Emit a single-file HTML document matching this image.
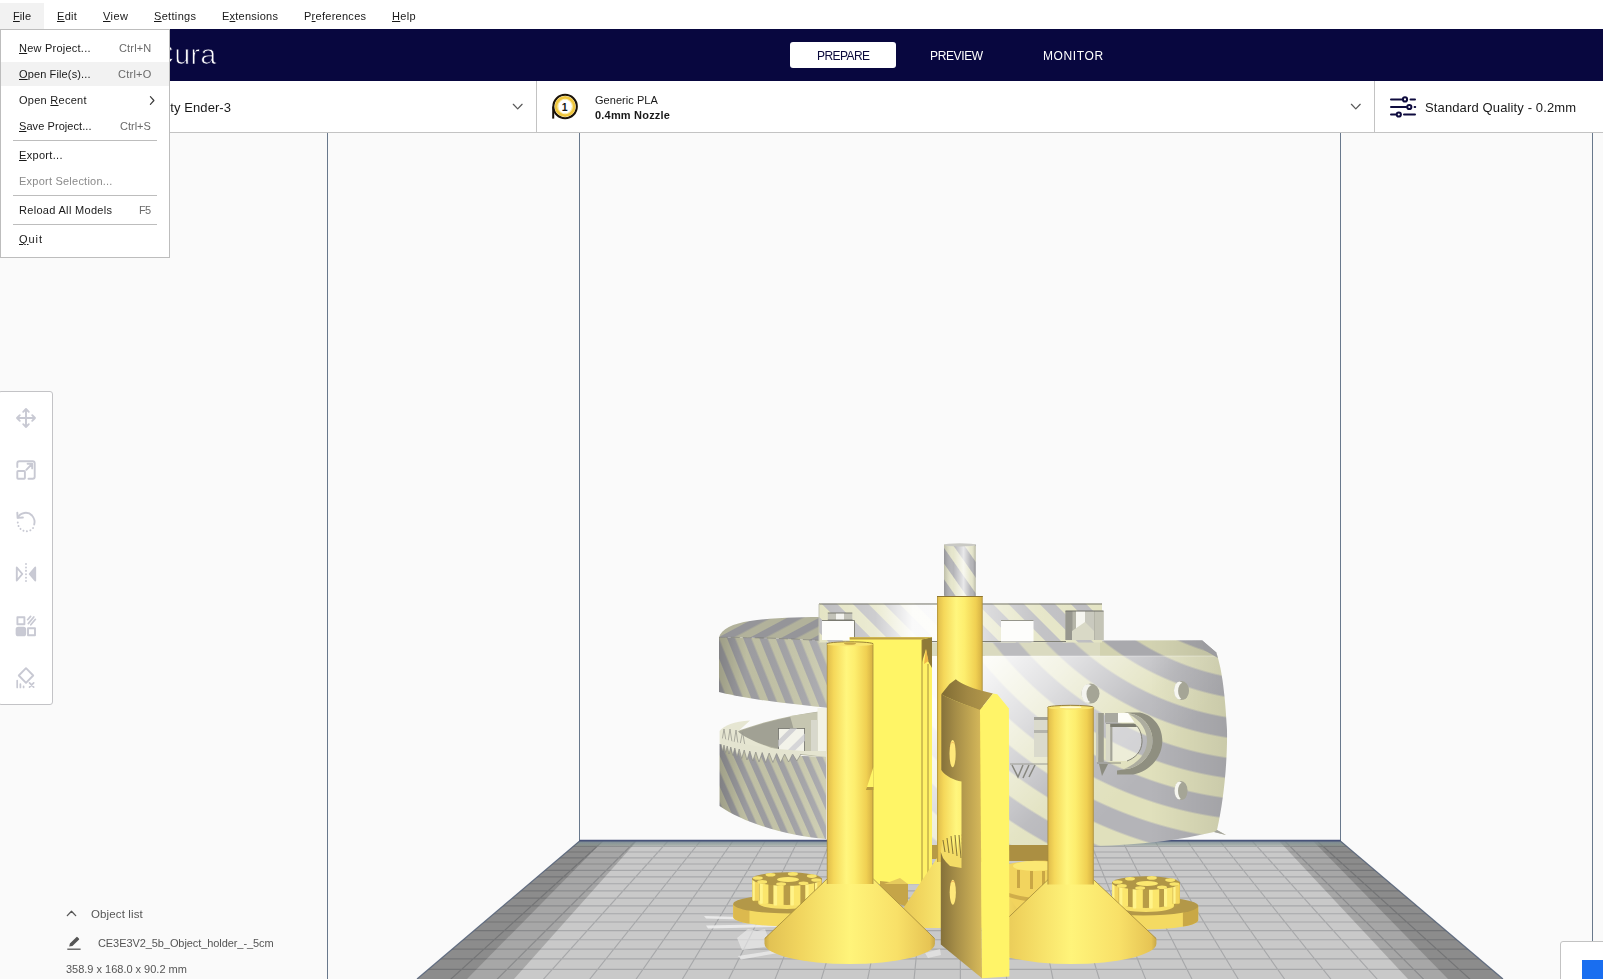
<!DOCTYPE html>
<html lang="en">
<head>
<meta charset="utf-8">
<title>Ultimaker Cura</title>
<style>
html,body{margin:0;padding:0;}
body{width:1603px;height:979px;overflow:hidden;position:relative;background:#fafafa;font-family:"Liberation Sans", Arial, sans-serif;}
.t{position:absolute;white-space:pre;line-height:20px;height:20px;font-size:11px;will-change:transform;}
.t u{text-decoration:underline;text-underline-offset:1px;text-decoration-thickness:1px;}
#scene{position:absolute;left:0;top:0;width:1603px;height:979px;}
#menubar{position:absolute;left:0;top:0;width:1603px;height:29px;background:#ffffff;}
#filebtn{position:absolute;left:0;top:3px;width:44px;height:26px;background:#f2f2f2;}
#header{position:absolute;left:0;top:29px;width:1603px;height:52px;background:#08073f;}
#prepare{position:absolute;left:790px;top:42px;width:106px;height:26px;background:#ffffff;border-radius:3px;}
#toolbar{position:absolute;left:0;top:81px;width:1603px;height:51px;background:#ffffff;border-bottom:1px solid #c3c3c3;}
.vsep{position:absolute;top:81px;width:1px;height:51px;background:#c3c3c3;}
#tools{position:absolute;left:-2px;top:391px;width:53px;height:312px;background:#ffffff;border:1px solid #c3c3c6;border-radius:3px;}
#actionpanel{position:absolute;left:1560px;top:941px;width:60px;height:60px;background:#ffffff;border:1px solid #c3c3c3;border-radius:3px;}
#slicebtn{position:absolute;left:1582px;top:960px;width:40px;height:30px;background:#196ef0;}
#filemenu{position:absolute;left:0;top:29px;width:168px;height:227px;background:#ffffff;border:1px solid #bdbdbd;}
#hl{position:absolute;left:1px;top:62px;width:168px;height:24px;background:#f2f2f2;}
.msep{position:absolute;left:13px;width:144px;height:1px;background:#bdbdbd;}
svg.ic{position:absolute;overflow:visible;}
</style>
</head>
<body>
<div id="scene">
<svg width="1603" height="979" viewBox="0 0 1603 979">
<defs>
<pattern id="st45" width="22" height="22" patternUnits="userSpaceOnUse" patternTransform="rotate(-45)">
 <rect width="22" height="22" fill="#e4e4c4"/><rect width="11" height="22" fill="#bdbdc0"/>
</pattern>
<pattern id="stUL" width="15" height="15" patternUnits="userSpaceOnUse" patternTransform="rotate(-22)">
 <rect width="15" height="15" fill="#c9c9ac"/><rect width="7.5" height="15" fill="#a6a6aa"/>
</pattern>
<pattern id="stULtop" width="15" height="15" patternUnits="userSpaceOnUse" patternTransform="rotate(62)">
 <rect width="15" height="15" fill="#bcbca4"/><rect width="7.5" height="15" fill="#9e9ea2"/>
</pattern>
<pattern id="stLL" width="12.5" height="12.5" patternUnits="userSpaceOnUse" patternTransform="rotate(-24)">
 <rect width="12.5" height="12.5" fill="#cbcbae"/><rect width="6.2" height="12.5" fill="#a4a4a8"/>
</pattern>
<pattern id="stThin" width="18" height="18" patternUnits="userSpaceOnUse" patternTransform="rotate(-35)">
 <rect width="18" height="18" fill="#e6e6cc"/><rect width="9" height="18" fill="#b4b4b8"/>
</pattern>
<radialGradient id="stWall" cx="1275" cy="425" r="40" gradientUnits="userSpaceOnUse" spreadMethod="repeat">
 <stop offset="0" stop-color="#e0e0bc"/><stop offset="0.38" stop-color="#e0e0bc"/><stop offset="0.43" stop-color="#b4b4b8"/><stop offset="0.88" stop-color="#b4b4b8"/><stop offset="0.93" stop-color="#e0e0bc"/><stop offset="1" stop-color="#e0e0bc"/>
</radialGradient>
<linearGradient id="wallHi" x1="985" y1="650" x2="1130" y2="790" gradientUnits="userSpaceOnUse">
 <stop offset="0" stop-color="#ffffff" stop-opacity="0.95"/><stop offset="0.35" stop-color="#ffffff" stop-opacity="0.6"/><stop offset="0.75" stop-color="#ffffff" stop-opacity="0.12"/><stop offset="1" stop-color="#ffffff" stop-opacity="0"/>
</linearGradient>
<linearGradient id="wallEdge" x1="1150" y1="0" x2="1228" y2="0" gradientUnits="userSpaceOnUse">
 <stop offset="0" stop-color="#000" stop-opacity="0"/><stop offset="1" stop-color="#000" stop-opacity="0.10"/>
</linearGradient>
<linearGradient id="ulShade" x1="719" y1="0" x2="830" y2="0" gradientUnits="userSpaceOnUse">
 <stop offset="0" stop-color="#000" stop-opacity="0.22"/><stop offset="0.25" stop-color="#000" stop-opacity="0.06"/><stop offset="1" stop-color="#fff" stop-opacity="0.12"/>
</linearGradient>
<linearGradient id="blockHi" x1="819" y1="0" x2="1102" y2="0" gradientUnits="userSpaceOnUse">
 <stop offset="0" stop-color="#fff" stop-opacity="0"/><stop offset="0.2" stop-color="#fff" stop-opacity="0.25"/><stop offset="0.33" stop-color="#fff" stop-opacity="0.92"/><stop offset="0.44" stop-color="#fff" stop-opacity="0.92"/><stop offset="0.6" stop-color="#fff" stop-opacity="0.45"/><stop offset="0.78" stop-color="#fff" stop-opacity="0.1"/><stop offset="1" stop-color="#fff" stop-opacity="0"/>
</linearGradient>
<linearGradient id="cyl" x1="0" y1="0" x2="1" y2="0">
 <stop offset="0" stop-color="#a88c3a"/><stop offset="0.035" stop-color="#e4c24e"/><stop offset="0.15" stop-color="#f5d85a"/><stop offset="0.42" stop-color="#fff67e"/><stop offset="0.6" stop-color="#fdee6e"/><stop offset="0.85" stop-color="#f0d052"/><stop offset="0.965" stop-color="#dab646"/><stop offset="1" stop-color="#a88c3a"/>
</linearGradient>
<linearGradient id="cone" x1="0" y1="0" x2="1" y2="0">
 <stop offset="0" stop-color="#c8a848"/><stop offset="0.03" stop-color="#e2c254"/><stop offset="0.2" stop-color="#f0d45e"/><stop offset="0.5" stop-color="#fff47a"/><stop offset="0.78" stop-color="#f8e068"/><stop offset="0.97" stop-color="#e6c454"/><stop offset="1" stop-color="#c8a848"/>
</linearGradient>
<linearGradient id="thinHi" x1="0" y1="0" x2="1" y2="0">
 <stop offset="0" stop-color="#000" stop-opacity="0.18"/><stop offset="0.3" stop-color="#fff" stop-opacity="0"/><stop offset="0.62" stop-color="#fff" stop-opacity="0.7"/><stop offset="0.85" stop-color="#fff" stop-opacity="0"/><stop offset="1" stop-color="#000" stop-opacity="0.22"/>
</linearGradient>
<linearGradient id="pieceL" x1="941" y1="0" x2="981" y2="0" gradientUnits="userSpaceOnUse">
 <stop offset="0" stop-color="#85713a"/><stop offset="0.35" stop-color="#a48c47"/><stop offset="1" stop-color="#d5b85a"/>
</linearGradient>
<linearGradient id="pieceTop" x1="941" y1="0" x2="995" y2="0" gradientUnits="userSpaceOnUse">
 <stop offset="0" stop-color="#7f6b33"/><stop offset="0.5" stop-color="#a18844"/><stop offset="1" stop-color="#b79c4c"/>
</linearGradient>
<linearGradient id="floorBack" x1="0" y1="841" x2="0" y2="847" gradientUnits="userSpaceOnUse">
 <stop offset="0" stop-color="#74869c" stop-opacity="0.85"/><stop offset="0.6" stop-color="#84968e" stop-opacity="0.55"/><stop offset="1" stop-color="#9aa89e" stop-opacity="0"/>
</linearGradient>
<clipPath id="floorClip"><polygon points="579.5,841 1340.5,841 1503,979 417,979"/></clipPath>
</defs>
<g fill="none" stroke="#68788c" stroke-width="1">
<line x1="327.5" y1="132" x2="327.5" y2="990"/>
<line x1="579.5" y1="132" x2="579.5" y2="841"/>
<line x1="1340.5" y1="132" x2="1340.5" y2="841"/>
<line x1="1592.5" y1="132" x2="1592.5" y2="990"/>
</g>
<g clip-path="url(#floorClip)">
<rect x="400" y="841" width="1120" height="140" fill="#c9c9c9"/>
<path d="M570.6,841L397.5,985M603.0,841L444.4,985M635.5,841L491.3,985M668.0,841L538.2,985M700.4,841L585.1,985M732.9,841L632.0,985M765.3,841L678.9,985M797.8,841L725.8,985M830.3,841L772.7,985M862.7,841L819.6,985M895.2,841L866.5,985M927.6,841L913.5,985M960.1,841L960.4,985M992.6,841L1007.3,985M1025.0,841L1054.2,985M1057.5,841L1101.1,985M1089.9,841L1148.0,985M1122.4,841L1194.9,985M1154.9,841L1241.8,985M1187.3,841L1288.7,985M1219.8,841L1335.6,985M1252.2,841L1382.5,985M1284.7,841L1429.5,985M1317.2,841L1476.4,985M1349.6,841L1523.3,985M400,846.3H1520M400,852.0H1520M400,857.9H1520M400,864.0H1520M400,870.3H1520M400,876.9H1520M400,883.7H1520M400,890.8H1520M400,898.1H1520M400,905.8H1520M400,913.7H1520M400,922.0H1520M400,930.6H1520M400,939.7H1520M400,949.1H1520M400,958.9H1520M400,969.3H1520M400,980.1H1520" stroke="#a7a8aa" stroke-width="1.15" fill="none"/>
<polygon points="579.5,841 637,841 514,979 417,979" fill="#000" fill-opacity="0.17"/>
<polygon points="579.5,841 603,841 467,979 417,979" fill="#000" fill-opacity="0.16"/>
<polygon points="1340.5,841 1279,841 1408,979 1503,979" fill="#000" fill-opacity="0.17"/>
<polygon points="1340.5,841 1313,841 1448,979 1503,979" fill="#000" fill-opacity="0.16"/>
<rect x="560" y="841" width="800" height="6" fill="url(#floorBack)"/>
</g>
<path d="M417,979L579.5,841H1340.5L1503,979" fill="none" stroke="#4f5d74" stroke-width="1.2" stroke-opacity="0.85"/>
<line x1="579.5" y1="840.5" x2="1340.5" y2="840.5" stroke="#47527a" stroke-width="1.3"/>
<!-- ===== thin striped rod on top ===== -->
<g>
<rect x="944" y="544.5" width="31.7" height="53" fill="url(#stThin)"/>
<rect x="944" y="544.5" width="31.7" height="53" fill="url(#thinHi)"/>
<ellipse cx="959.8" cy="544.8" rx="15.8" ry="1.6" fill="#c9c9c4"/>
</g>

<!-- ===== upper-left striped ring ===== -->
<g>
<path id="ulSide" d="M719,637.5 C735,637 780,638 830,641 L830,708 C800,705 750,700 719,692 Z" fill="url(#stUL)"/>
<path d="M719,637.5 C735,637 780,638 830,641 L830,708 C800,705 750,700 719,692 Z" fill="url(#ulShade)"/>
<path d="M719,637.5 C721,629 733,623.5 750,621 C775,617.5 800,617 830,617 L830,641 C780,638 735,637 719,637.5 Z" fill="url(#stULtop)"/>
<path d="M719,637.5 C721,629 733,623.5 750,621 C775,617.5 800,617 830,617 L830,641 C780,638 735,637 719,637.5 Z" fill="#000" fill-opacity="0.05"/>
<path d="M719,637.5 C735,637 780,638 830,641" fill="none" stroke="#77776c" stroke-width="0.9" stroke-dasharray="9 3" stroke-opacity="0.7"/>
</g>

<!-- ===== lower-left gear ring ===== -->
<g>
<!-- inner back surface (lens) -->
<path d="M733,733 C760,722 795,714 826,710.5 L826,757 C800,756 765,752 733,733 Z" fill="#b9b9a4"/>
<path d="M736,732.5 C760,723 790,716 818,712 L818,753 C790,752 760,747 736,732.5 Z" fill="#8e8e86" fill-opacity="0.55"/>
<path d="M790,716 L818,712 L818,753 L800,752 Z" fill="#cfcfb8" fill-opacity="0.8"/>
<!-- light vertical post -->
<rect x="817.5" y="708" width="9" height="46" fill="#f2f2e6"/>
<rect x="811" y="720" width="6.5" height="34" fill="#d8d8cc"/>
<!-- light square hole -->
<rect x="778.4" y="728.4" width="26.2" height="23.6" fill="#f3f3ea" stroke="#6f6f68" stroke-width="0.8"/>
<path d="M778.4,740 L790,728.4 L797,728.4 L778.4,747 Z" fill="#d2d2d4"/>
<path d="M786,752 L804.6,733.5 L804.6,741 L793.5,752 Z" fill="#d6d6d8"/>
<!-- teeth tops (cream) -->
<path d="M719.6,744 L719.6,731 C724,725.5 734,721.5 750,720.5 L738,731.5 C742,736 760,745 780,750.5 L780,754 Z" fill="#e6e6d2"/>
<path d="M722,741 l2,-12 l2,12 m2,1 l2,-13 l2,13 m2,1 l2,-13 l2,14 m2,1 l2.5,-13 l2.5,14" fill="none" stroke="#9a9a90" stroke-width="0.8"/>
<!-- side face -->
<path d="M719.6,744 C745,752 790,756 826,757 L826,839 C790,836 745,824 719.6,806 Z" fill="url(#stLL)"/>
<path d="M719.6,744 C745,752 790,756 826,757 L826,839 C790,836 745,824 719.6,806 Z" fill="url(#ulShade)"/>
<!-- teeth notches along top of side -->
<path d="M721,744 l1.5,7 l1.5,-6 l1.6,7.5 l1.6,-6.5 l1.8,8 l1.8,-7 l2,8.5 l2,-7.5 l2.2,9 l2.2,-8 l2.5,9.5 l2.5,-8.5 l2.8,10 l2.8,-9 l3,10 l3,-9 l3.2,10 l3.2,-9.5 l3.5,10 l3.5,-9.5 l3.7,9.5 l3.7,-9 l4,9 l4,-8.5 l4,8 l4,-8 l4.2,7 l4.2,-7 L826,757 L826,751 C790,752 745,746 721,738 Z" fill="#e4e4d0"/>
<path d="M721,744 l1.5,7 l1.5,-6 l1.6,7.5 l1.6,-6.5 l1.8,8 l1.8,-7 l2,8.5 l2,-7.5 l2.2,9 l2.2,-8 l2.5,9.5 l2.5,-8.5 l2.8,10 l2.8,-9 l3,10 l3,-9 l3.2,10 l3.2,-9.5 l3.5,10 l3.5,-9.5 l3.7,9.5 l3.7,-9 l4,9 l4,-8.5 l4,8 l4,-8 l4.2,7 l4.2,-7" fill="none" stroke="#8d8d86" stroke-width="0.7"/>
</g>

<!-- ===== right big wall ===== -->
<g>
<path id="wall" d="M930,641 L1202,640.3 L1216,652.3 C1221,665 1225,690 1227,730 C1227.5,760 1224,800 1217,830 L1226,835 L1214,832 C1180,840 1140,845 1094,846 L930,846 Z" fill="url(#stWall)"/>
<path d="M930,656 L1218,656 C1221,665 1225,690 1227,730 C1227.5,760 1224,800 1217,830 L1226,835 L1214,832 C1180,840 1140,845 1094,846 L930,846 Z" fill="url(#wallHi)"/>
<path d="M930,641 L1100,641 L1100,656 L930,656 Z" fill="#ffffff" fill-opacity="0.25"/>
<path d="M930,641 L1202,640.3 L1216,652.3 C1221,665 1225,690 1227,730 C1227.5,760 1224,800 1217,830 L1226,835 L1214,832 C1180,840 1140,845 1094,846 L930,846 Z" fill="url(#wallEdge)"/>
<!-- top band of wall -->
<path d="M930,641 L1202,640.3 L1216,652.3 L1218,656 L930,656 Z" fill="#000" fill-opacity="0.06"/>
<path d="M985,656 H1218" stroke="#fff" stroke-opacity="0.35" stroke-width="1"/>
<path d="M1202,640.3 L1216,652.3 L1218,658 L1204,650 Z" fill="#9c9ca0"/>
<path d="M1217,830 L1226,835 L1214,832 Z" fill="#a2a29c"/>
<!-- holes in wall -->
<ellipse cx="1090.5" cy="693.5" rx="9" ry="10" fill="#a5a596"/><ellipse cx="1088" cy="693.5" rx="6.5" ry="9.5" fill="#f4f4ee"/><ellipse cx="1092.5" cy="694" rx="6" ry="9" fill="#a5a596"/>

<ellipse cx="1181.5" cy="690.5" rx="7.5" ry="9.5" fill="#a5a596"/><ellipse cx="1179.5" cy="690.5" rx="5.5" ry="9" fill="#f6f6f0"/><ellipse cx="1183.3" cy="691" rx="5.2" ry="8.6" fill="#a5a596"/>

<ellipse cx="1181" cy="790.5" rx="6.5" ry="9.5" fill="#a5a596"/><ellipse cx="1179.3" cy="790.5" rx="4.8" ry="9" fill="#f6f6f0"/><ellipse cx="1182.6" cy="791" rx="4.6" ry="8.6" fill="#a5a596"/>

<!-- D bracket -->
<path d="M1124,712.6 L1140,712.6 C1156,716 1163,730 1162.3,742 C1161.5,758 1150,771 1133,774.6 L1117,774.6 L1117,770.5 L1130,768.5 C1143,764.5 1152,754 1152.5,742 C1153,731 1147,719 1134,714.2 Z" fill="#8f8f80"/>
<path d="M1134,714.2 C1147,719 1153,731 1152.5,742 C1152,754 1143,764.5 1130,768.5 L1124,768.8 C1137,764 1146.5,754 1147,742 C1147.3,731 1142,721 1129,714.2 Z" fill="#adad9f"/>
<path d="M1106,724 H1134 C1140,727 1142,735 1142,742 C1141.5,752 1135,758 1127,761 H1106 Z" fill="#ffffff" fill-opacity="0.38"/>
<path d="M1106,724 H1134 C1140,727 1142,735 1142,742 C1141.5,752 1135,758 1127,761" fill="none" stroke="#77776c" stroke-width="0.9"/>
<path d="M1106,724 H1135 L1137,727 H1109 Z" fill="#7c7c70"/>
<rect x="1105.8" y="724" width="4.4" height="37" fill="#d8d8c8"/>
<rect x="1110.2" y="727" width="2.2" height="34" fill="#a4a498"/>
<rect x="1096" y="713" width="2.2" height="49" fill="#c6c6ba"/>
<rect x="1098.2" y="713" width="5.6" height="49" fill="#9c9c90"/>
<rect x="1105" y="713" width="13" height="9.6" fill="#a9a9a0"/>
<path d="M1118,713 L1128,713 L1134.5,722.6 L1118,722.6 Z" fill="#fdfdf8"/>
<path d="M1097,763 H1121" stroke="#8c8c80" stroke-width="1"/>
<path d="M1099,764 L1108,764 L1102,776 Z" fill="#8c8c80"/>
<!-- stuff left of right cylinder -->
<rect x="1034" y="717" width="14" height="40" fill="#dadacc"/>
<rect x="1034" y="717" width="14" height="3" fill="#a2a29a"/>
<rect x="1034" y="730" width="14" height="3" fill="#b4b4ac"/>
<!-- inverted teeth under -->
<path d="M1010,764 H1048" stroke="#9a9a92" stroke-width="1"/>
<path d="M1012,765 l6,12 l5,-12 m6,0 l-6,13 m12,-13 l-6,12" fill="none" stroke="#86867e" stroke-width="1.5"/>

</g>

<!-- ===== top block ===== -->
<g>
<rect x="819" y="603.6" width="283" height="38.9" fill="url(#st45)"/>
<rect x="819" y="603.6" width="283" height="38.9" fill="url(#blockHi)"/>
<path d="M819,604 H1102" stroke="#76766a" stroke-width="1"/>
<path d="M819,604 V642" stroke="#c4c4b4" stroke-width="1"/>
<!-- lower lip line -->
<path d="M932,641.5 H1066" stroke="#7e7e74" stroke-width="1"/>

<!-- white holes -->
<rect x="822" y="620.5" width="32.5" height="19.5" fill="#fdfdfb"/>
<path d="M822,620.5 H854.5 V640" fill="none" stroke="#77776c" stroke-width="0.9"/>
<rect x="1001" y="620.5" width="32.5" height="21" fill="#fdfdfb"/>
<path d="M1001,620.5 H1033.5" fill="none" stroke="#8b8b80" stroke-width="0.9"/>
<!-- small cylinder above hole 1 -->
<rect x="827.8" y="613" width="24.5" height="7" fill="#c2c2b8"/>
<rect x="836" y="613" width="8" height="7" fill="#f4f4f0"/>
<path d="M827.8,613 H852.3 M827.8,620 H852.3" stroke="#6f6f66" stroke-width="0.9"/>
<!-- cylindrical hole at right -->
<rect x="1065.5" y="611" width="38" height="29" fill="#b5b5a8"/>
<rect x="1065.5" y="611" width="7" height="29" fill="#97978e"/>
<rect x="1076" y="611" width="9" height="20" fill="#f6f6f0"/>
<rect x="1085" y="611" width="9" height="22" fill="#c9c9be"/>
<path d="M1072,631 L1085,622 L1094,631 L1094,640 L1072,640 Z" fill="#d9d9c6"/>
<rect x="1095" y="611" width="8.5" height="29" fill="#c4c4b6"/>
<path d="M1065.5,611 H1103.5" stroke="#6f6f66" stroke-width="1"/>
</g>

<!-- ===== white-ish debris on floor ===== -->
<g fill="#efefef" fill-opacity="0.85">
<path d="M704,916 L742,917 L742,919.5 L706,918.6 Z"/>
<path d="M706,925.5 L778,924 L778,927 L708,928.5 Z"/>
<path d="M737,938 L748,929 L757,931 L765,929 L771,946 L742,950 Z" fill-opacity="0.6"/>
<path d="M738,956 L795,947 L796,950 L741,959.5 Z" fill-opacity="0.7"/>
<path d="M925,953 L940,949 L941,955 L928,958 Z" fill-opacity="0.6"/>
</g>

<!-- ===== gears (behind) ===== -->
<g id="gearL">
<path d="M733.2,904 L733.2,917 A58.3,9.5 0 0 0 849.8,917 L849.8,904 Z" fill="#f4da62"/>
<path d="M733.2,904 L733.2,917 A58.3,9.5 0 0 0 749.5,923.6 L749.5,910.6 Z" fill="#dcb94e"/>
<ellipse cx="791.5" cy="904" rx="58.3" ry="9.5" fill="#b39848"/>
<path d="M752.2,878 L752.2,900 A34.8,7 0 0 0 821.8,900 L821.8,878 Z" fill="#b89c46"/>
<path d="M758.2,899 A28.799999999999997,6 0 0 0 815.8,899 L815.8,903 A28.799999999999997,6 0 0 1 758.2,903 Z" fill="#f7e068"/>
<rect x="752.5" y="879.5" width="6.5" height="21.3" rx="1.2" fill="#f3d65e"/>
<rect x="752.5" y="879.5" width="2.3" height="21.3" rx="1" fill="#fff38a"/>
<rect x="759.7" y="880.2" width="8.7" height="23.6" rx="1.2" fill="#fbe66c"/>
<rect x="759.7" y="880.2" width="3.1" height="23.6" rx="1" fill="#fff38a"/>
<rect x="773.6" y="880.7" width="10.0" height="24.9" rx="1.2" fill="#fbe66c"/>
<rect x="773.6" y="880.7" width="3.5" height="24.9" rx="1" fill="#fff38a"/>
<rect x="790.4" y="880.7" width="10.0" height="24.9" rx="1.2" fill="#fbe66c"/>
<rect x="790.4" y="880.7" width="3.5" height="24.9" rx="1" fill="#fff38a"/>
<rect x="805.5" y="880.2" width="8.7" height="23.6" rx="1.2" fill="#fbe66c"/>
<rect x="805.5" y="880.2" width="3.1" height="23.6" rx="1" fill="#fff38a"/>
<rect x="815.0" y="879.5" width="6.5" height="21.3" rx="1.2" fill="#f3d65e"/>
<rect x="815.0" y="879.5" width="2.3" height="21.3" rx="1" fill="#fff38a"/>
<ellipse cx="787" cy="879" rx="34.8" ry="6.8" fill="#b09646"/>
<ellipse cx="816.2" cy="880.0" rx="5" ry="1.8" fill="#f8e46c"/>
<ellipse cx="803.5" cy="883.3" rx="5" ry="1.8" fill="#f8e46c"/>
<ellipse cx="781.1" cy="884.1" rx="5" ry="1.8" fill="#f8e46c"/>
<ellipse cx="762.2" cy="881.9" rx="5" ry="1.8" fill="#f8e46c"/>
<ellipse cx="757.8" cy="878.0" rx="5" ry="1.8" fill="#f8e46c"/>
<ellipse cx="770.5" cy="874.7" rx="5" ry="1.8" fill="#f8e46c"/>
<ellipse cx="792.9" cy="873.9" rx="5" ry="1.8" fill="#f8e46c"/>
<ellipse cx="811.8" cy="876.1" rx="5" ry="1.8" fill="#f8e46c"/>
<ellipse cx="788" cy="879.5" rx="11" ry="2.6" fill="#fbe870"/>
</g>
<g id="gearR">
<path d="M1088.8,906 L1088.8,920 A54.7,9.5 0 0 0 1198.2,920 L1198.2,906 Z" fill="#f4da62"/>
<path d="M1198.2,906 L1198.2,920 A54.7,9.5 0 0 1 1182.9,926.6 L1182.9,912.6 Z" fill="#c9a846"/>
<ellipse cx="1143.5" cy="906" rx="54.7" ry="9.5" fill="#b39848"/>
<path d="M1112,882 L1112,903 A34,7 0 0 0 1180,903 L1180,882 Z" fill="#b89c46"/>
<path d="M1118,902 A28,6 0 0 0 1174,902 L1174,906 A28,6 0 0 1 1118,906 Z" fill="#f7e068"/>
<rect x="1112.2" y="883.5" width="6.5" height="20.3" rx="1.2" fill="#f3d65e"/>
<rect x="1112.2" y="883.5" width="2.3" height="20.3" rx="1" fill="#fff38a"/>
<rect x="1119.3" y="884.2" width="8.7" height="22.6" rx="1.2" fill="#fbe66c"/>
<rect x="1119.3" y="884.2" width="3.1" height="22.6" rx="1" fill="#fff38a"/>
<rect x="1132.8" y="884.7" width="10.0" height="23.9" rx="1.2" fill="#fbe66c"/>
<rect x="1132.8" y="884.7" width="3.5" height="23.9" rx="1" fill="#fff38a"/>
<rect x="1149.2" y="884.7" width="10.0" height="23.9" rx="1.2" fill="#fbe66c"/>
<rect x="1149.2" y="884.7" width="3.5" height="23.9" rx="1" fill="#fff38a"/>
<rect x="1164.0" y="884.2" width="8.7" height="22.6" rx="1.2" fill="#fbe66c"/>
<rect x="1164.0" y="884.2" width="3.1" height="22.6" rx="1" fill="#fff38a"/>
<rect x="1173.3" y="883.5" width="6.5" height="20.3" rx="1.2" fill="#f3d65e"/>
<rect x="1173.3" y="883.5" width="2.3" height="20.3" rx="1" fill="#fff38a"/>
<ellipse cx="1146" cy="883" rx="34" ry="6.8" fill="#b09646"/>
<ellipse cx="1174.4" cy="884.0" rx="5" ry="1.8" fill="#f8e46c"/>
<ellipse cx="1162.0" cy="887.3" rx="5" ry="1.8" fill="#f8e46c"/>
<ellipse cx="1140.2" cy="888.1" rx="5" ry="1.8" fill="#f8e46c"/>
<ellipse cx="1121.8" cy="885.9" rx="5" ry="1.8" fill="#f8e46c"/>
<ellipse cx="1117.6" cy="882.0" rx="5" ry="1.8" fill="#f8e46c"/>
<ellipse cx="1130.0" cy="878.7" rx="5" ry="1.8" fill="#f8e46c"/>
<ellipse cx="1151.8" cy="877.9" rx="5" ry="1.8" fill="#f8e46c"/>
<ellipse cx="1170.2" cy="880.1" rx="5" ry="1.8" fill="#f8e46c"/>
<ellipse cx="1147" cy="883.5" rx="11" ry="2.6" fill="#fbe870"/>
</g>
<!-- partial gear between piece and right cylinder -->
<g>
<rect x="1009" y="845" width="40" height="16" fill="#ab8f42"/>
<path d="M1009,864 C1020,861 1040,860 1049,861 L1049,915 L1009,915 Z" fill="#f2d45e"/>
<ellipse cx="1035" cy="866" rx="22" ry="5" fill="#fbe873"/>
<g fill="#c9a645"><rect x="1017" y="870" width="3" height="18"/><rect x="1030" y="871" width="3" height="18"/><rect x="1042" y="871" width="3" height="18"/></g>
<path d="M1009,893 C1020,897 1040,899 1049,899 L1049,903 C1040,903 1020,901 1009,897 Z" fill="#d0ad4a"/>
</g>
<!-- dark yellow band behind center (under wall) -->
<rect x="895" y="845" width="45" height="14" fill="#b79a46"/>

<!-- ===== yellow box (behind left cylinder) ===== -->
<g>
<path d="M849.7,637.3 L932,637.3 L932,884 L849.7,884 Z" fill="#fff566"/>
<path d="M849.7,637.3 L932,637.3 L922,639.6 L849.7,639.6 Z" fill="#bfa244"/>
<path d="M922,639.6 L932,637.3 L932,884 L922,884 Z" fill="#fff266"/>
<path d="M922,639.6 L932,637.3 L932,668 L928,661 L926,649 L922,662 Z" fill="#8f7a38"/>
<path d="M926,649 L928.5,661 L924,664 Z" fill="#f0b848"/>
<path d="M922,640 V884 M928,664 V884" stroke="#9c8538" stroke-width="0.9" fill="none"/>
<!-- dark base block -->
<path d="M880,881 L908,884 L908,907 L880,898 Z" fill="#c5a548"/>
<path d="M884,884 L900,878 L908,884 Z" fill="#e7cb5c"/>
</g>

<!-- ===== centre cylinder + cone ===== -->
<g>
<path d="M937,858 L983,858 L1030,928 L890,928 Z" fill="url(#cone)"/>
<rect x="937" y="596" width="45.7" height="266" fill="url(#cyl)"/>
<path d="M937,596.5 H982.7" stroke="#8d7430" stroke-width="1"/>
</g>

<!-- ===== left cylinder + cone ===== -->
<g>
<path d="M827,879 L873.4,879 L934.9,938.5 L934.9,943.5 A85.2,20.5 0 0 1 764.5,943.5 L764.5,938.5 Z" fill="url(#cone)"/>
<path d="M827,879 L764.8,938.5 M873.4,879 L934.6,938.5" stroke="#9c8436" stroke-width="1" stroke-opacity="0.75" fill="none"/>
<rect x="826.8" y="644" width="46.6" height="240" fill="url(#cyl)"/>
<ellipse cx="850.1" cy="644" rx="23.3" ry="2.2" fill="#f9e570"/>
<path d="M826.8,644 A23.3,2.2 0 0 1 873.4,644" fill="none" stroke="#8d7430" stroke-width="0.9"/>
<ellipse cx="850" cy="643.6" rx="6" ry="1.1" fill="#c8a848"/>
<!-- notch detail -->
<path d="M873.4,767 L867,787 L873.4,787 Z" fill="#fff566"/>
<path d="M867,787 L873.4,787 L873.4,790 L866,790 Z" fill="#b89a40"/>
</g>

<!-- ===== right cylinder + cone ===== -->
<g>
<path d="M1048,879.7 L1093.6,879.7 L1156.4,938.5 L1156.4,943.5 A85.2,20.5 0 0 1 986,943.5 L986,938.5 Z" fill="url(#cone)"/>
<path d="M1048,879.7 L986.3,938.5 M1093.6,879.7 L1156.1,938.5" stroke="#9c8436" stroke-width="1" stroke-opacity="0.75" fill="none"/>
<rect x="1047.5" y="707.5" width="46.3" height="177" fill="url(#cyl)"/>
<ellipse cx="1070.6" cy="707.5" rx="23.1" ry="2.2" fill="#f9e570"/>
<path d="M1047.5,707.5 A23.1,2.2 0 0 1 1093.8,707.5" fill="none" stroke="#8d7430" stroke-width="0.9"/>
<ellipse cx="1070.6" cy="707.2" rx="11" ry="1" fill="#fffbd0"/>
</g>

<!-- ===== curved piece (front centre) ===== -->
<g>
<!-- lower-left teeth -->
<path d="M941,850 L943,840 L945,852 L947,838 L949,853 L951,836 L953,854 L955,835 L957,856 L959,835 L961,858 L961.5,835 L975,835 L975,870 L941,870 Z" fill="#f4dc66"/>
<path d="M943,840 L945,852 M947,838 L949,853 M951,836 L953,854 M955,835 L957,856 M959,835 L961,858" stroke="#6b5a2a" stroke-width="0.8" fill="none"/>
<path d="M961.5,835 H975 M961.5,839 H975 M961.5,843 H975" stroke="#8b7636" stroke-width="0.6"/>
<!-- left curved face -->
<path d="M941.3,694.3 C952,700 968,706 980,710 L982,978.3 L940.8,944.6 L940.8,852 L943,858 L946,862 L950,866 L961.5,868 L961.5,781.6 C955,780.5 945,776 941.3,770 Z" fill="url(#pieceL)"/>
<!-- top face -->
<path d="M941.3,694.3 L949.5,684 L955.8,679.3 C960,683 970,688 982,690.8 L993,693.6 L980,710 C968,706 952,700 941.3,694.3 Z" fill="url(#pieceTop)"/>
<!-- front bright face -->
<path d="M993,693.6 L997.3,694.3 L1008.9,708.6 L1009.4,976.5 L982,978.3 L980,710 Z" fill="#fff468"/>
<!-- slots -->
<ellipse cx="952.6" cy="753.7" rx="3.1" ry="13.6" fill="#ffe87a"/>
<path d="M949.6,750 A3.1,10 0 0 1 955.6,750 L955,746 A2.6,6 0 0 0 950.2,746 Z" fill="#d9662a"/>
<ellipse cx="952.8" cy="892.2" rx="3.1" ry="12.5" fill="#ffe87a"/>
<path d="M949.8,888 A3.1,9 0 0 1 955.8,888 L955.2,884.5 A2.6,5.5 0 0 0 950.4,884.5 Z" fill="#d9662a"/>
</g>

</svg>

</div>
<div id="menubar"><div id="filebtn"></div></div>
<div id="header"><div id="logo"></div></div>
<div id="prepare"></div>
<div id="toolbar"></div>
<div class="vsep" style="left:536px"></div>
<div class="vsep" style="left:1374px"></div>
<div id="tools"></div>
<div id="actionpanel"></div>
<div id="slicebtn"></div>
<!-- logo -->
<div id="logotext" style="will-change:transform;position:absolute;left:23.4px;top:35px;height:40px;line-height:40px;white-space:pre;color:#fff;font-size:28px;letter-spacing:0.6px;-webkit-text-stroke:0.75px #08073f;"><b style="font-weight:700;-webkit-text-stroke:0;letter-spacing:-0.6px">Ultimaker</b> Cura</div>
<!-- chevrons in toolbar -->
<svg class="ic" style="left:510px;top:100px" width="16" height="14" viewBox="0 0 16 14"><path d="M3.3,4.3 L7.7,8.9 L12.1,4.3" fill="none" stroke="#5a5a5a" stroke-width="1.25" stroke-linecap="round" stroke-linejoin="round"/></svg>
<svg class="ic" style="left:1348px;top:100px" width="16" height="14" viewBox="0 0 16 14"><path d="M3.4,4.3 L7.8,8.9 L12.2,4.3" fill="none" stroke="#5a5a5a" stroke-width="1.25" stroke-linecap="round" stroke-linejoin="round"/></svg>
<!-- extruder icon -->
<svg class="ic" style="left:548px;top:90px" width="34" height="34" viewBox="548 90 34 34">
 <path d="M553.2,106.5 V118.6" stroke="#1a1208" stroke-width="2" fill="none"/>
 <circle cx="565.1" cy="106.5" r="11.7" fill="#ffffff" stroke="#1a1208" stroke-width="2.1"/>
 <circle cx="565.1" cy="106.5" r="8.7" fill="none" stroke="#efc63e" stroke-width="3.6"/>
 <circle cx="565.1" cy="106.5" r="7.3" fill="none" stroke="#fdf6c8" stroke-width="0.9"/>
 <text x="564.6" y="110.6" font-family="Liberation Sans, Arial, sans-serif" font-weight="700" font-size="10.5" text-anchor="middle" fill="#141414">1</text>
</svg>
<!-- sliders icon -->
<svg class="ic" style="left:1386px;top:92px" width="34" height="30" viewBox="1386 92 34 30">
 <g stroke="#0e0b3e" stroke-width="2" fill="none" stroke-linecap="round">
  <path d="M1391,99.4 H1402 M1410.5,99.4 H1415"/>
  <path d="M1391,107 H1406.2 M1414.6,107 H1415.2"/>
  <path d="M1391,114.5 H1395.6 M1404,114.5 H1415"/>
  <circle cx="1405" cy="99.4" r="2.1" fill="#fff"/>
  <circle cx="1409.3" cy="107" r="2.1" fill="#fff"/>
  <circle cx="1398.8" cy="114.5" r="2.1" fill="#fff"/>
 </g>
</svg>
<!-- left tool icons -->
<svg class="ic" style="left:10px;top:400px" width="34" height="300" viewBox="10 400 34 300">
 <g stroke="#c8c9d3" stroke-width="1.9" fill="none" stroke-linecap="round" stroke-linejoin="round">
  <!-- move -->
  <path d="M17,418 H35 M26,409 V427 M19.8,415.2 L17,418 L19.8,420.8 M32.2,415.2 L35,418 L32.2,420.8 M23.2,411.8 L26,409 L28.8,411.8 M23.2,424.2 L26,427 L28.8,424.2"/>
  <!-- scale -->
  <path d="M17.3,467 V463.3 a2,2 0 0 1 2,-2 H32.7 a2,2 0 0 1 2,2 V476.7 a2,2 0 0 1 -2,2 H28.5"/>
  <rect x="17.3" y="471" width="7.6" height="7.7" rx="0.8"/>
  <path d="M26.3,469.8 L32,464 M27.6,463.8 H32.2 V468.4"/>
  <!-- rotate -->
  <path d="M18,517.5 C20,512.5 28,511 32,515.5 C34.5,518.5 35,522 34.2,524.5"/>
  <path d="M17.3,512.6 L17.6,517.9 L22.9,517.5"/>
  <path d="M17.8,522.5 C18,529 24,533 30,530.5 C32,529.6 33.3,528 34,526.3" stroke-dasharray="0.1 3.4"/>
  <!-- mirror -->
  <path d="M26,564 V584" stroke-dasharray="0.1 3.3"/>
  <path d="M16.8,567.5 L22.3,574 L16.8,580.5 Z"/>
  <path d="M35.2,567.5 L29.7,574 L35.2,580.5 Z" fill="#c9cad4"/>
  <!-- per model settings -->
  <rect x="17.4" y="617.3" width="7" height="7"/>
  <path d="M28.3,623.6 L33.8,617 M30.8,624.8 L35.4,619.3 M27.6,619.7 L30.6,616.4" stroke-width="1.7"/>
  <rect x="16.6" y="627.8" width="8.6" height="7.6" rx="1.6" fill="#c9cad4"/>
  <rect x="28" y="628.3" width="7" height="7"/>
  <!-- support blocker -->
  <path d="M26,668.2 L33.2,675.5 L26,682.8 L18.8,675.5 Z"/>
  <path d="M17.2,680.5 V687.5 M20.4,684 V687.5 M23.6,686.3 V687.5" stroke-width="1.7"/>
  <path d="M29.5,682.8 L33.7,687.2 M33.7,682.8 L29.5,687.2" stroke-width="1.7"/>
 </g>
</svg>
<!-- object list icons -->
<svg class="ic" style="left:64px;top:906px" width="16" height="14" viewBox="64 906 16 14"><path d="M67.3,915.6 L71.5,911.2 L75.7,915.6" fill="none" stroke="#555" stroke-width="1.3" stroke-linecap="round" stroke-linejoin="round"/></svg>
<svg class="ic" style="left:64px;top:934px" width="20" height="18" viewBox="64 934 20 18">
 <path d="M67.3,949.2 H80.6" stroke="#555" stroke-width="1.3" fill="none"/>
 <path d="M69.2,946.6 L69.9,943.6 L76.3,937.2 a0.9,0.9 0 0 1 1.3,0 L78.9,938.5 a0.9,0.9 0 0 1 0,1.3 L72.4,946.1 Z" fill="#555"/>
</svg>

<div class="t" style="left:13.1px;top:6.0px;font-size:11px;letter-spacing:0.09px;color:#191919;"><u>F</u>ile</div>
<div class="t" style="left:57.3px;top:6.0px;font-size:11px;letter-spacing:0.31px;color:#191919;"><u>E</u>dit</div>
<div class="t" style="left:103.1px;top:6.0px;font-size:11px;letter-spacing:0.45px;color:#191919;"><u>V</u>iew</div>
<div class="t" style="left:154.1px;top:6.0px;font-size:11px;letter-spacing:0.32px;color:#191919;"><u>S</u>ettings</div>
<div class="t" style="left:222.4px;top:6.0px;font-size:11px;letter-spacing:0.24px;color:#191919;">E<u>x</u>tensions</div>
<div class="t" style="left:304.3px;top:6.0px;font-size:11px;letter-spacing:0.27px;color:#191919;">P<u>r</u>eferences</div>
<div class="t" style="left:392.2px;top:6.0px;font-size:11px;letter-spacing:0.32px;color:#191919;"><u>H</u>elp</div>
<div class="t" style="left:816.8px;top:45.8px;font-size:12px;letter-spacing:-0.58px;color:#0b0a3c;">PREPARE</div>
<div class="t" style="left:929.8px;top:45.8px;font-size:12px;letter-spacing:-0.37px;color:#ffffff;">PREVIEW</div>
<div class="t" style="left:1042.7px;top:45.8px;font-size:12px;letter-spacing:0.62px;color:#ffffff;">MONITOR</div>
<div class="t" style="left:136.1px;top:97.5px;font-size:13px;letter-spacing:0.07px;color:#191919;">Creality Ender-3</div>
<div class="t" style="left:594.5px;top:89.8px;font-size:11px;letter-spacing:0.04px;color:#191919;">Generic PLA</div>
<div class="t" style="left:594.5px;top:104.9px;font-size:11px;letter-spacing:0.20px;color:#191919;font-weight:700;">0.4mm Nozzle</div>
<div class="t" style="left:1425.4px;top:98.0px;font-size:13px;letter-spacing:0.13px;color:#191919;">Standard Quality - 0.2mm</div>
<div class="t" style="left:91.4px;top:904.0px;font-size:11.5px;letter-spacing:0.13px;color:#555555;">Object list</div>
<div class="t" style="left:98.4px;top:933.0px;font-size:11px;letter-spacing:-0.08px;color:#555555;">CE3E3V2_5b_Object_holder_-_5cm</div>
<div class="t" style="left:65.7px;top:958.7px;font-size:11px;letter-spacing:-0.01px;color:#555555;">358.9 x 168.0 x 90.2 mm</div>
<div id="filemenu"></div>
<div id="hl"></div>
<div class="msep" style="top:140px"></div>
<div class="msep" style="top:195px"></div>
<div class="msep" style="top:224px"></div>
<div class="t" style="left:19.1px;top:38.0px;font-size:11px;letter-spacing:0.23px;color:#191919;"><u>N</u>ew Project...</div>
<div class="t" style="left:19.1px;top:64.0px;font-size:11px;letter-spacing:0.13px;color:#191919;"><u>O</u>pen File(s)...</div>
<div class="t" style="left:19.1px;top:90.0px;font-size:11px;letter-spacing:0.27px;color:#191919;">Open <u>R</u>ecent</div>
<div class="t" style="left:19.1px;top:116.0px;font-size:11px;letter-spacing:0.07px;color:#191919;"><u>S</u>ave Project...</div>
<div class="t" style="left:19.1px;top:145.0px;font-size:11px;letter-spacing:0.32px;color:#191919;"><u>E</u>xport...</div>
<div class="t" style="left:19.1px;top:171.0px;font-size:11px;letter-spacing:0.23px;color:#8a8a8a;">Export Selection...</div>
<div class="t" style="left:19.1px;top:200.0px;font-size:11px;letter-spacing:0.31px;color:#191919;">Reload All Models</div>
<div class="t" style="left:19.1px;top:229.0px;font-size:11px;letter-spacing:0.94px;color:#191919;"><u>Q</u>uit</div>
<div class="t" style="left:118.6px;top:38.0px;font-size:11px;letter-spacing:0.16px;color:#6a6a6a;">Ctrl+N</div>
<div class="t" style="left:117.6px;top:64.0px;font-size:11px;letter-spacing:0.24px;color:#6a6a6a;">Ctrl+O</div>
<div class="t" style="left:120.1px;top:116.0px;font-size:11px;letter-spacing:-0.01px;color:#6a6a6a;">Ctrl+S</div>
<div class="t" style="left:138.7px;top:200.0px;font-size:11px;letter-spacing:-0.64px;color:#6a6a6a;">F5</div>
<svg class="ic" style="left:147px;top:94px" width="10" height="14" viewBox="147 94 10 14"><path d="M150.4,96.6 L153.9,100.5 L150.4,104.4" fill="none" stroke="#3c3c3c" stroke-width="1.2" stroke-linecap="round" stroke-linejoin="round"/></svg>

</body>
</html>
